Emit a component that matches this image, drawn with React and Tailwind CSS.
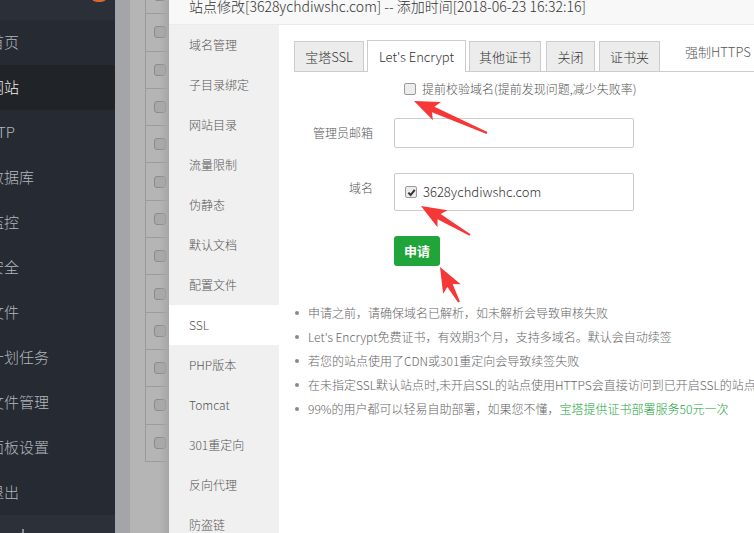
import React from "react";

const menu = ["首页", "网站", "FTP", "数据库", "监控", "安全", "文件", "计划任务", "文件管理", "面板设置", "退出"];
const nav = ["域名管理", "子目录绑定", "网站目录", "流量限制", "伪静态", "默认文档", "配置文件", "SSL", "PHP版本", "Tomcat", "301重定向", "反向代理", "防盗链"];

const Arrow = ({ x1, y1, x2, y2 }) => {
  const dx = x2 - x1, dy = y2 - y1, L = Math.hypot(dx, dy);
  const ux = dx / L, uy = dy / L, px = -uy, py = ux;
  const hl = 25, hw = 10, sw0 = 1, sw1 = 3;
  const bx = x2 - ux * hl, by = y2 - uy * hl;
  const nx = x2 - ux * (hl - 4), ny = y2 - uy * (hl - 4);
  const pts = [
    [x1 + px * sw0, y1 + py * sw0],
    [nx + px * sw1, ny + py * sw1],
    [bx + px * hw, by + py * hw],
    [x2, y2],
    [bx - px * hw, by - py * hw],
    [nx - px * sw1, ny - py * sw1],
    [x1 - px * sw0, y1 - py * sw0],
  ];
  return <polygon points={pts.map((p) => p.join(",")).join(" ")} fill="#f53737" />;
};

const Box = ({ checked }) => (
  <span className="w-[12px] h-[12px] shrink-0 rounded-[2px] border border-[#9a9a9a] bg-[#ececec] flex items-center justify-center">
    {checked && (
      <svg width="9" height="9" viewBox="0 0 10 10">
        <path d="M1.5 5.2 L4 7.8 L8.6 2" stroke="#333" strokeWidth="2.2" fill="none" />
      </svg>
    )}
  </span>
);

const tips = [
  "申请之前，请确保域名已解析，如未解析会导致审核失败",
  "Let's Encrypt免费证书，有效期3个月，支持多域名。默认会自动续签",
  "若您的站点使用了CDN或301重定向会导致续签失败",
  "在未指定SSL默认站点时,未开启SSL的站点使用HTTPS会直接访问到已开启SSL的站点",
];

export default function App() {
  return (
    <div className="w-[754px] h-[533px] relative overflow-hidden flex bg-[#b5b5b5] font-['Noto_Sans_CJK_SC',sans-serif] font-light">
      {/* dark sidebar */}
      <div className="w-[115px] h-full shrink-0 bg-[#262a32] flex flex-col overflow-hidden">
        <div className="h-[20px] shrink-0 bg-[#2b2f38] relative">
          <div className="absolute left-[91px] top-[-10px] w-[16px] h-[12px] rounded-full bg-[#d9662a]" />
        </div>
        {menu.map((m, i) => (
          <div
            key={m}
            className={`h-[45px] shrink-0 flex items-center whitespace-nowrap ${i === 1 ? "bg-[#202328] text-[#f2f2f2]" : "text-[#b3b7bd]"}`}
          >
            <span className="-ml-[11px] text-[15px]">{m}</span>
          </div>
        ))}
        <div className="flex-1 bg-[#2b3039] relative">
          <div className="absolute left-[22px] bottom-0 w-[2px] h-[4px] bg-[#8a8f96]" />
        </div>
      </div>

      {/* dimmed background page */}
      <div className="w-[15px] h-full shrink-0 bg-[#a4a5a8]" />
      <div className="w-[39px] h-full shrink-0 bg-[#b5b5b5] relative overflow-hidden">
        <div className="ml-[15px] -mt-[23px] border-l border-[#9a9a9a] flex flex-col">
          {Array.from({ length: 13 }).map((_, i) => (
            <div key={i} className="h-[37.3px] shrink-0 border-b border-[#9c9c9c] flex items-center pl-[8px]">
              <span className="w-[12px] h-[12px] rounded-[3px] bg-[#a9a9a9] border border-[#8a8a8a]" />
            </div>
          ))}
        </div>
        <div className="absolute right-0 top-0 bottom-0 w-[10px] bg-linear-to-r from-transparent to-[#a6a6a6]" />
      </div>

      {/* modal */}
      <div className="flex-1 flex flex-col bg-white">
        <div className="h-[25px] shrink-0 bg-[#f8f8f8] border-b border-[#ebebeb] pl-[20px] overflow-hidden">
          <div className="text-[14px] leading-[14px] -mt-[1px] text-[#333] whitespace-nowrap">
            站点修改[3628ychdiwshc.com] -- 添加时间[2018-06-23 16:32:16]
          </div>
        </div>
        <div className="flex flex-1">
          <div className="w-[110px] shrink-0 bg-[#f0f0f0] flex flex-col">
            {nav.map((n) => (
              <div
                key={n}
                className={`h-[40px] shrink-0 flex items-center pl-[20px] text-[12px] text-[#555] ${n === "SSL" ? "bg-white" : ""}`}
              >
                {n}
              </div>
            ))}
          </div>
          <div className="flex-1 pl-[15px] pt-[15px] overflow-hidden">
            <div className="flex items-end h-[32px] border-b border-[#ccc]">
              <div className="w-[70px] h-[30px] mr-[3px] bg-[#ececec] border border-b-0 border-[#ccc] flex items-center justify-center text-[13px] text-[#333]">
                宝塔SSL
              </div>
              <div className="w-[99px] h-[32px] -mb-px mr-[3px] bg-white border border-b-0 border-[#ccc] flex items-center justify-center text-[13px] text-[#333] whitespace-nowrap">
                Let's Encrypt
              </div>
              <div className="w-[72px] h-[30px] mr-[5px] bg-[#ececec] border border-b-0 border-[#ccc] flex items-center justify-center text-[13px] text-[#333]">
                其他证书
              </div>
              <div className="w-[49px] h-[30px] mr-[4px] bg-[#ececec] border border-b-0 border-[#ccc] flex items-center justify-center text-[13px] text-[#333]">
                关闭
              </div>
              <div className="w-[61px] h-[30px] bg-[#ececec] border border-b-0 border-[#ccc] flex items-center justify-center text-[13px] text-[#333]">
                证书夹
              </div>
              <div className="self-start mt-[4px] ml-[25px] text-[13px] leading-[16px] text-[#555] whitespace-nowrap">
                强制HTTPS
              </div>
            </div>

            <div className="mt-[10px] pl-[110px] h-[14px] flex items-center gap-[6px]">
              <Box />
              <span className="text-[12px] leading-none text-[#555] whitespace-nowrap">
                提前校验域名(提前发现问题,减少失败率)
              </span>
            </div>

            <div className="mt-[22px] flex">
              <div className="w-[79px] text-right leading-[30px] text-[12px] text-[#555]">管理员邮箱</div>
              <div className="ml-[21px] w-[240px] h-[30px] border border-[#ccc] rounded-[2px]" />
            </div>

            <div className="mt-[25px] flex">
              <div className="w-[79px] text-right leading-[30px] text-[12px] text-[#555]">域名</div>
              <div className="ml-[21px] w-[240px] h-[38px] border border-[#ccc] rounded-[2px] flex items-center pl-[10px] gap-[6px]">
                <Box checked />
                <span className="text-[13px] text-[#333]">3628ychdiwshc.com</span>
              </div>
            </div>

            <button className="mt-[25px] ml-[100px] w-[46px] h-[30px] bg-[#20a53a] rounded-[3px] text-white text-[13px] font-bold flex items-center justify-center">
              申请
            </button>

            <ul className="mt-[35px]">
              {tips.map((t) => (
                <li key={t} className="flex items-center leading-[24px] text-[12px] text-[#666] whitespace-nowrap">
                  <span className="w-[4px] h-[4px] rounded-full bg-[#888] ml-[1px] mr-[9px] shrink-0" />
                  {t}
                </li>
              ))}
              <li className="flex items-center leading-[24px] text-[12px] text-[#666] whitespace-nowrap">
                <span className="w-[4px] h-[4px] rounded-full bg-[#888] ml-[1px] mr-[9px] shrink-0" />
                99%的用户都可以轻易自助部署，如果您不懂，
                <span className="text-[#20a53a]">宝塔提供证书部署服务50元一次</span>
              </li>
            </ul>
          </div>
        </div>
      </div>

      <svg className="absolute inset-0 pointer-events-none" width="754" height="533">
        <Arrow x1={487} y1={133} x2={414} y2={101} />
        <Arrow x1={470} y1={235} x2={421} y2={206} />
        <Arrow x1={459} y1={302} x2={440} y2={267} />
      </svg>
    </div>
  );
}
